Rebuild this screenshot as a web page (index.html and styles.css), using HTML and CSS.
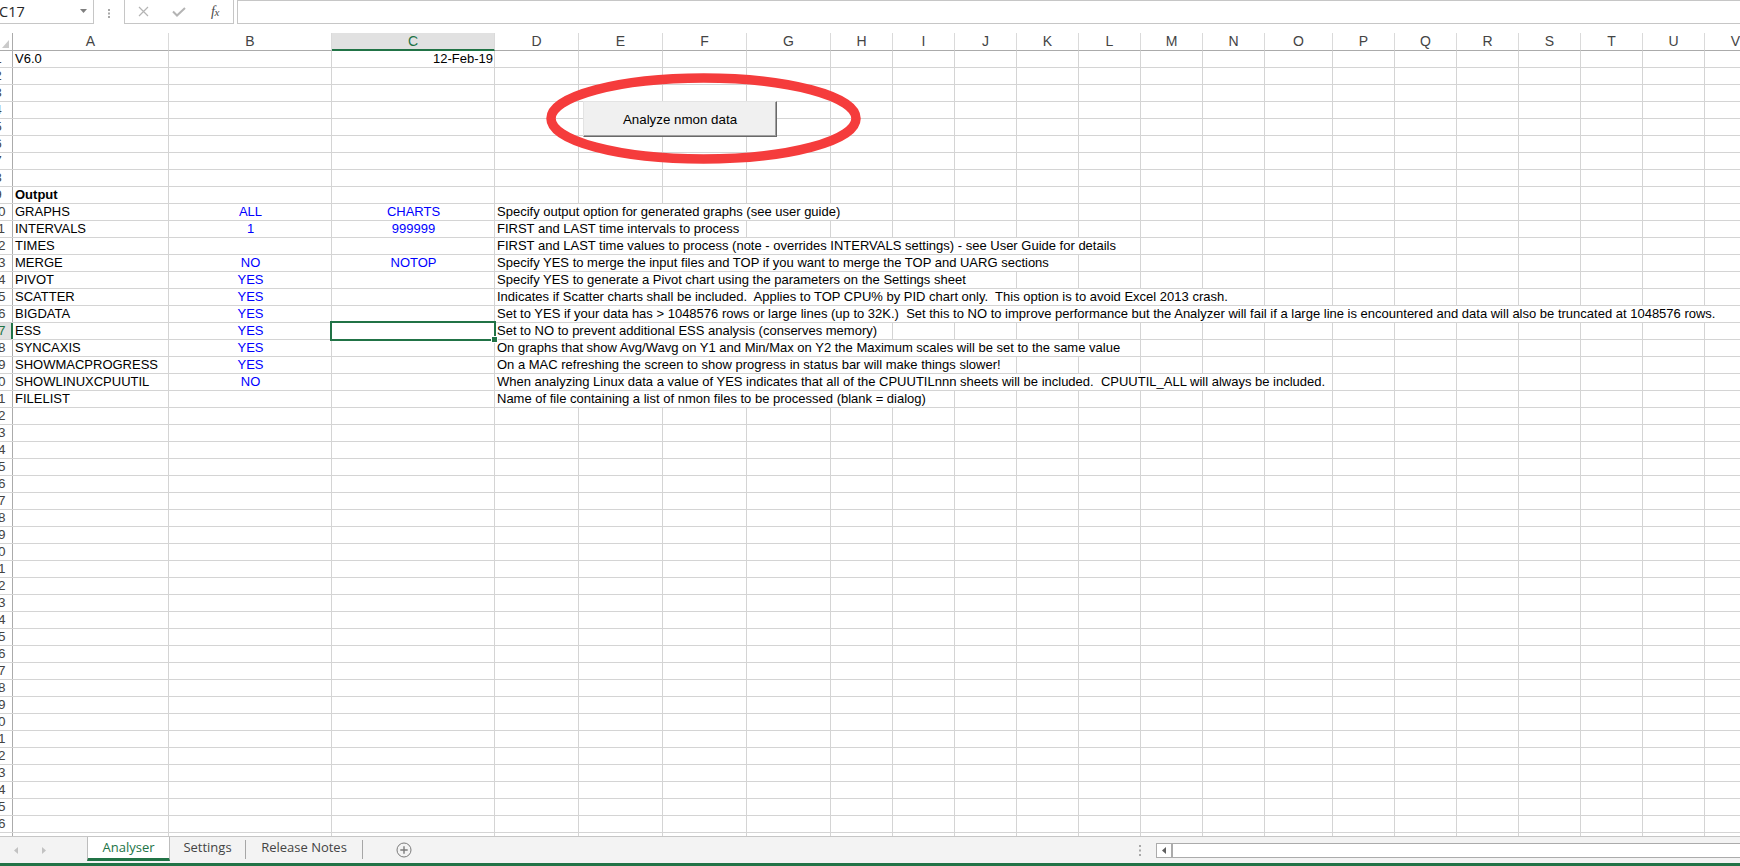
FILE: index.html
```html
<!DOCTYPE html>
<html lang="en">
<head>
<meta charset="utf-8">
<title>nmon Analyser</title>
<link rel="stylesheet" href="styles.css">
</head>
<body>
<div class="app">
  <div class="fbar">
    <div class="namebox"><span>C17</span><svg width="7" height="4" viewBox="0 0 7 4"><path d="M0 0H7L3.5 4Z" fill="#7f7f7f"/></svg></div>
    <svg class="vdots" width="2" height="9" viewBox="0 0 2 9"><rect y="0" width="2" height="2" fill="#a8a8a8"/><rect y="3.5" width="2" height="2" fill="#a8a8a8"/><rect y="7" width="2" height="2" fill="#a8a8a8"/></svg>
    <div class="fxbox">
      <span class="slot"><svg width="11" height="11" viewBox="0 0 11 11"><path d="M1 1L10 10M10 1L1 10" stroke="#b4b4b4" stroke-width="1.2" fill="none"/></svg></span>
      <span class="slot"><svg width="14" height="10" viewBox="0 0 14 10"><path d="M1 4.5L5 8.5L13 1" stroke="#b4b4b4" stroke-width="2" fill="none"/></svg></span>
      <span class="slot fx">f<span class="fxx">x</span></span>
    </div>
    <div class="finput"></div>
  </div>

  <div class="sheet">
    <div class="colhdr">
      <div class="hc corner"><svg width="7" height="8" viewBox="0 0 7 8"><path d="M7 0V8H0Z" fill="#cacaca"/></svg></div>
      <div class="hc">A</div><div class="hc">B</div><div class="hc selh">C</div><div class="hc">D</div><div class="hc">E</div><div class="hc">F</div><div class="hc">G</div><div class="hc">H</div><div class="hc">I</div><div class="hc">J</div><div class="hc">K</div><div class="hc">L</div><div class="hc">M</div><div class="hc">N</div><div class="hc">O</div><div class="hc">P</div><div class="hc">Q</div><div class="hc">R</div><div class="hc">S</div><div class="hc">T</div><div class="hc">U</div><div class="hc">V</div>
    </div>

    <div class="row"><div class="rh"><span>1</span></div><div class="c">V6.0</div><div class="c"></div><div class="c rt">12-Feb-19</div></div>
    <div class="row"><div class="rh"><span>2</span></div></div>
    <div class="row"><div class="rh"><span>3</span></div></div>
    <div class="row"><div class="rh"><span>4</span></div></div>
    <div class="row"><div class="rh"><span>5</span></div></div>
    <div class="row"><div class="rh"><span>6</span></div></div>
    <div class="row"><div class="rh"><span>7</span></div></div>
    <div class="row"><div class="rh"><span>8</span></div></div>
    <div class="row"><div class="rh"><span>9</span></div><div class="c bold">Output</div></div>
    <div class="row"><div class="rh"><span>10</span></div><div class="c">GRAPHS</div><div class="c ctr blue">ALL</div><div class="c ctr blue">CHARTS</div><div class="c d"><span>Specify output option for generated graphs (see user guide)</span></div></div>
    <div class="row"><div class="rh"><span>11</span></div><div class="c">INTERVALS</div><div class="c ctr blue">1</div><div class="c ctr blue">999999</div><div class="c d"><span>FIRST and LAST time intervals to process</span></div></div>
    <div class="row"><div class="rh"><span>12</span></div><div class="c">TIMES</div><div class="c"></div><div class="c"></div><div class="c d"><span>FIRST and LAST time values to process (note - overrides INTERVALS settings) - see User Guide for details</span></div></div>
    <div class="row"><div class="rh"><span>13</span></div><div class="c">MERGE</div><div class="c ctr blue">NO</div><div class="c ctr blue">NOTOP</div><div class="c d"><span>Specify YES to merge the input files and TOP if you want to merge the TOP and UARG sections</span></div></div>
    <div class="row"><div class="rh"><span>14</span></div><div class="c">PIVOT</div><div class="c ctr blue">YES</div><div class="c"></div><div class="c d"><span>Specify YES to generate a Pivot chart using the parameters on the Settings sheet</span></div></div>
    <div class="row"><div class="rh"><span>15</span></div><div class="c">SCATTER</div><div class="c ctr blue">YES</div><div class="c"></div><div class="c d"><span>Indicates if Scatter charts shall be included.  Applies to TOP CPU% by PID chart only.  This option is to avoid Excel 2013 crash.</span></div></div>
    <div class="row"><div class="rh"><span>16</span></div><div class="c">BIGDATA</div><div class="c ctr blue">YES</div><div class="c"></div><div class="c d"><span>Set to YES if your data has &gt; 1048576 rows or large lines (up to 32K.)  Set this to NO to improve performance but the Analyzer will fail if a large line is encountered and data will also be truncated at 1048576 rows.</span></div></div>
    <div class="row"><div class="rh sel"><span>17</span></div><div class="c">ESS</div><div class="c ctr blue">YES</div><div class="c"></div><div class="c d"><span>Set to NO to prevent additional ESS analysis (conserves memory)</span></div></div>
    <div class="row"><div class="rh"><span>18</span></div><div class="c">SYNCAXIS</div><div class="c ctr blue">YES</div><div class="c"></div><div class="c d"><span>On graphs that show Avg/Wavg on Y1 and Min/Max on Y2 the Maximum scales will be set to the same value</span></div></div>
    <div class="row"><div class="rh"><span>19</span></div><div class="c">SHOWMACPROGRESS</div><div class="c ctr blue">YES</div><div class="c"></div><div class="c d"><span>On a MAC refreshing the screen to show progress in status bar will make things slower!</span></div></div>
    <div class="row"><div class="rh"><span>20</span></div><div class="c">SHOWLINUXCPUUTIL</div><div class="c ctr blue">NO</div><div class="c"></div><div class="c d"><span>When analyzing Linux data a value of YES indicates that all of the CPUUTILnnn sheets will be included.  CPUUTIL_ALL will always be included.</span></div></div>
    <div class="row"><div class="rh"><span>21</span></div><div class="c">FILELIST</div><div class="c"></div><div class="c"></div><div class="c d"><span>Name of file containing a list of nmon files to be processed (blank = dialog)</span></div></div>
    <div class="row"><div class="rh"><span>22</span></div></div>
    <div class="row"><div class="rh"><span>23</span></div></div>
    <div class="row"><div class="rh"><span>24</span></div></div>
    <div class="row"><div class="rh"><span>25</span></div></div>
    <div class="row"><div class="rh"><span>26</span></div></div>
    <div class="row"><div class="rh"><span>27</span></div></div>
    <div class="row"><div class="rh"><span>28</span></div></div>
    <div class="row"><div class="rh"><span>29</span></div></div>
    <div class="row"><div class="rh"><span>30</span></div></div>
    <div class="row"><div class="rh"><span>31</span></div></div>
    <div class="row"><div class="rh"><span>32</span></div></div>
    <div class="row"><div class="rh"><span>33</span></div></div>
    <div class="row"><div class="rh"><span>34</span></div></div>
    <div class="row"><div class="rh"><span>35</span></div></div>
    <div class="row"><div class="rh"><span>36</span></div></div>
    <div class="row"><div class="rh"><span>37</span></div></div>
    <div class="row"><div class="rh"><span>38</span></div></div>
    <div class="row"><div class="rh"><span>39</span></div></div>
    <div class="row"><div class="rh"><span>40</span></div></div>
    <div class="row"><div class="rh"><span>41</span></div></div>
    <div class="row"><div class="rh"><span>42</span></div></div>
    <div class="row"><div class="rh"><span>43</span></div></div>
    <div class="row"><div class="rh"><span>44</span></div></div>
    <div class="row"><div class="rh"><span>45</span></div></div>
    <div class="row"><div class="rh"><span>46</span></div></div>
    <div class="row"><div class="rh"><span>47</span></div></div>

    <div class="selbox"></div>
    <div class="handle"></div>
    <div class="macrobtn">Analyze nmon data</div>
    <svg class="ring" width="315" height="91" viewBox="0 0 315 91"><ellipse cx="157.5" cy="45.5" rx="152.5" ry="40.5" fill="none" stroke="#f53c3c" stroke-width="9.5"/></svg>
  </div>

  <div class="tabbar">
    <div class="sheetnav">
      <div class="navarrows">
        <svg width="4" height="7" viewBox="0 0 4 7"><path d="M4 0V7L0 3.5Z" fill="#c2c2c2"/></svg>
        <svg width="4" height="7" viewBox="0 0 4 7"><path d="M0 0V7L4 3.5Z" fill="#c2c2c2"/></svg>
      </div>
      <div class="tab active">Analyser</div>
      <div class="tab settings">Settings</div>
      <div class="tsep"></div>
      <div class="tab notes">Release Notes</div>
      <div class="tsep"></div>
      <svg class="addsheet" width="16" height="16" viewBox="0 0 16 16"><circle cx="8" cy="8" r="7" fill="none" stroke="#7b7b7b" stroke-width="1"/><path d="M8 4.3V11.7M4.3 8H11.7" stroke="#7b7b7b" stroke-width="1.4"/></svg>
    </div>
    <svg class="hdots" width="2" height="11" viewBox="0 0 2 11"><rect y="0" width="2" height="2" fill="#a8a8a8"/><rect y="4.5" width="2" height="2" fill="#a8a8a8"/><rect y="9" width="2" height="2" fill="#a8a8a8"/></svg>
    <div class="hscroll">
      <div class="sbtn"><svg width="4" height="7" viewBox="0 0 4 7"><path d="M4 0V7L0 3.5Z" fill="#5f5f5f"/></svg></div>
    </div>
  </div>
</div>
</body>
</html>
```

FILE: styles.css
```css
:root {
  --grid: #d4d4d4;
  --green: #217346;
  --gl: linear-gradient(#d4d4d4, #d4d4d4);
}

html, body {
  margin: 0;
  padding: 0;
}

body {
  width: 1740px;
  height: 866px;
  overflow: hidden;
  background: #ffffff;
  font-family: "Liberation Sans", Arial, sans-serif;
  color: #000;
}

.app {
  display: flex;
  flex-direction: column;
  height: 866px;
  overflow: hidden;
}

/* ---------- formula bar ---------- */
.fbar {
  flex: none;
  height: 33px;
  display: flex;
  align-items: flex-start;
}

.namebox {
  margin-left: -10px;
  width: 104px;
  height: 24px;
  box-sizing: border-box;
  border: 1px solid #c6c6c6;
  border-top: none;
  display: flex;
  align-items: center;
  justify-content: space-between;
  padding: 0 6px 0 8px;
  font-family: "Open Sans", "Liberation Sans", sans-serif;
  font-size: 14.5px;
  color: #262626;
}

.namebox svg {
  margin-top: -1px;
}

.vdots {
  margin-left: 14px;
  margin-top: 9px;
  flex: none;
}

.fxbox {
  margin-left: 14px;
  width: 110px;
  height: 24px;
  box-sizing: border-box;
  border: 1px solid #c6c6c6;
  border-top: none;
  display: flex;
  align-items: center;
  padding-left: 0;
}

.slot {
  width: 36px;
  display: flex;
  justify-content: center;
  align-items: center;
}

.fx {
  font-family: "Liberation Serif", "DejaVu Serif", serif;
  font-style: italic;
  font-size: 14px;
  color: #4a4a4a;
  letter-spacing: -0.5px;
}

.fxx {
  font-size: 11px;
}

.finput {
  flex: 1;
  margin-left: 3px;
  margin-right: -10px;
  height: 24px;
  box-sizing: border-box;
  border: 1px solid #c6c6c6;
}

/* ---------- sheet ---------- */
.sheet {
  position: relative;
  flex: 1;
  overflow: hidden;
}

.colhdr {
  display: grid;
  grid-template-columns: 13px 156px 163px 163px 84px 84px 84px 84px 62px 62px 62px 62px 62px 62px 62px 68px 62px 62px 62px 62px 62px 62px 62px;
  height: 18px;
  width: 1767px;
}

.hc {
  box-sizing: border-box;
  height: 18px;
  border-right: 1px solid #dadada;
  border-bottom: 1px solid #ababab;
  text-align: center;
  font-size: 14px;
  line-height: 17px;
  color: #444444;
  background: #ffffff;
}

.corner {
  border-right-color: #ababab;
  display: flex;
  justify-content: flex-end;
  align-items: flex-end;
  padding: 0 3px 2px 0;
}

.selh {
  background: #e1e1e1;
  color: var(--green);
  border-bottom: 2px solid var(--green);
  line-height: 16px;
}

.row {
  display: grid;
  grid-template-columns: 13px 156px 163px 163px 1fr;
  height: 17px;
  box-sizing: border-box;
  border-bottom: 1px solid var(--grid);
  font-size: 13px;
  line-height: 16px;
  background-image: var(--gl), var(--gl), var(--gl), var(--gl), var(--gl), var(--gl), var(--gl),
    var(--gl), var(--gl), var(--gl), var(--gl), var(--gl), var(--gl), var(--gl),
    var(--gl), var(--gl), var(--gl), var(--gl), var(--gl), var(--gl), var(--gl);
  background-size: 1px 100%;
  background-repeat: no-repeat;
  background-position: 168px 0, 331px 0, 494px 0, 578px 0, 662px 0, 746px 0, 830px 0,
    892px 0, 954px 0, 1016px 0, 1078px 0, 1140px 0, 1202px 0, 1264px 0,
    1332px 0, 1394px 0, 1456px 0, 1518px 0, 1580px 0, 1642px 0, 1704px 0;
}

.rh {
  box-sizing: border-box;
  border-right: 1px solid #ababab;
  overflow: hidden;
  display: flex;
  background: #ffffff;
  color: #444444;
  font-size: 13.5px;
}

.rh span {
  flex: none;
  width: 28px;
  margin-left: -16px;
  text-align: center;
}

.rh.sel {
  background: #e1e1e1;
  color: var(--green);
  border-right: 2px solid var(--green);
}

.c {
  padding: 0 2px;
  white-space: pre;
  overflow: hidden;
}

.c.d {
  overflow: visible;
  padding: 0;
}

.c.d span {
  display: inline-block;
  background: #ffffff;
  padding: 0 2px;
}

.ctr { text-align: center; }
.rt { text-align: right; }
.bold { font-weight: bold; }
.blue { color: #0000ff; }

/* overlays on the sheet canvas */
.selbox {
  position: absolute;
  left: 330px;
  top: 288px;
  width: 166px;
  height: 20px;
  box-sizing: border-box;
  border: 2px solid var(--green);
}

.handle {
  position: absolute;
  left: 492px;
  top: 304px;
  width: 5px;
  height: 5px;
  background: var(--green);
  outline: 1px solid #ffffff;
}

.macrobtn {
  position: absolute;
  left: 583px;
  top: 68px;
  width: 194px;
  height: 36px;
  box-sizing: border-box;
  background: #f0f0f0;
  border-top: 1px solid #e3e3e3;
  border-left: 1px solid #e3e3e3;
  border-right: 1px solid #696969;
  border-bottom: 1px solid #696969;
  box-shadow: inset -1px -1px 0 #a0a0a0;
  display: flex;
  align-items: center;
  justify-content: center;
  font-size: 13.33px;
  color: #000;
  padding-top: 1px;
}

.ring {
  position: absolute;
  left: 546px;
  top: 40px;
}

/* ---------- sheet tabs ---------- */
.tabbar {
  flex: none;
  height: 30px;
  box-sizing: border-box;
  border-top: 1px solid #c6c6c6;
  border-bottom: 3px solid var(--green);
  background: #f3f3f3;
  display: flex;
  align-items: flex-start;
  font-family: "Open Sans", "Liberation Sans", sans-serif;
  font-size: 13px;
  color: #444444;
}

.sheetnav {
  flex: 0 0 1139px;
  height: 26px;
  display: flex;
  align-items: flex-start;
}

.navarrows {
  width: 87px;
  height: 26px;
  display: flex;
  align-items: center;
  padding-left: 14px;
  gap: 24px;
  box-sizing: border-box;
}

.tab {
  height: 24px;
  box-sizing: border-box;
  line-height: 21px;
  text-align: center;
}

.tab.active {
  width: 83px;
  background: #ffffff;
  color: var(--green);
  border-left: 1px solid #bdbdbd;
  border-right: 1px solid #bdbdbd;
  border-bottom: 3px solid var(--green);
}

.tab.settings {
  width: 75px;
}

.tab.notes {
  width: 116px;
}

.tsep {
  width: 1px;
  height: 19px;
  margin-top: 3px;
  background: #a6a6a6;
}

.addsheet {
  margin-left: 33px;
  margin-top: 5px;
}

.hdots {
  flex: none;
  margin-top: 8px;
}

.hscroll {
  flex: 1;
  margin-left: 15px;
  margin-right: -20px;
  margin-top: 6px;
  height: 15px;
  box-sizing: border-box;
  border: 1px solid #ababab;
  background: #ffffff;
  display: flex;
}

.sbtn {
  width: 16px;
  box-sizing: border-box;
  border-right: 2px solid #ababab;
  display: flex;
  align-items: center;
  justify-content: center;
}
```
